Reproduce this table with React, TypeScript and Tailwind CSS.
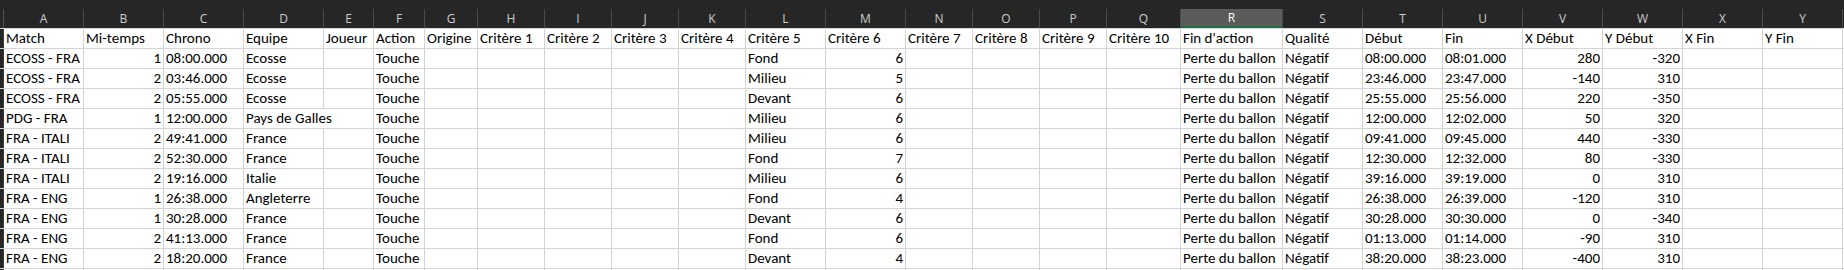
type Col = { letter: string; w: string; num?: boolean };

const cols: Col[] = [
  { letter: 'A', w: 'w-[80px]' },
  { letter: 'B', w: 'w-[80px]', num: true },
  { letter: 'C', w: 'w-[80px]' },
  { letter: 'D', w: 'w-[80px]' },
  { letter: 'E', w: 'w-[50px]' },
  { letter: 'F', w: 'w-[51px]' },
  { letter: 'G', w: 'w-[53px]' },
  { letter: 'H', w: 'w-[67px]' },
  { letter: 'I', w: 'w-[67px]' },
  { letter: 'J', w: 'w-[67px]' },
  { letter: 'K', w: 'w-[67px]' },
  { letter: 'L', w: 'w-[80px]' },
  { letter: 'M', w: 'w-[80px]', num: true },
  { letter: 'N', w: 'w-[67px]' },
  { letter: 'O', w: 'w-[67px]' },
  { letter: 'P', w: 'w-[67px]' },
  { letter: 'Q', w: 'w-[74px]' },
  { letter: 'R', w: 'w-[102px]' },
  { letter: 'S', w: 'w-[80px]' },
  { letter: 'T', w: 'w-[80px]' },
  { letter: 'U', w: 'w-[80px]' },
  { letter: 'V', w: 'w-[80px]', num: true },
  { letter: 'W', w: 'w-[80px]', num: true },
  { letter: 'X', w: 'w-[80px]' },
  { letter: 'Y', w: 'w-[80px]' },
];

const titles = [
  'Match', 'Mi-temps', 'Chrono', 'Equipe', 'Joueur', 'Action', 'Origine',
  'Critère 1', 'Critère 2', 'Critère 3', 'Critère 4', 'Critère 5', 'Critère 6',
  'Critère 7', 'Critère 8', 'Critère 9', 'Critère 10',
  "Fin d'action", 'Qualité', 'Début', 'Fin', 'X Début', 'Y Début', 'X Fin', 'Y Fin',
];

function line(
  match: string, mt: string, chrono: string, equipe: string,
  zone: string, crit6: string, debut: string, fin: string, xd: string, yd: string,
) {
  return [
    match, mt, chrono, equipe, '', 'Touche', '', '', '', '', '', zone, crit6,
    '', '', '', '', 'Perte du ballon', 'Négatif', debut, fin, xd, yd, '', '',
  ];
}

const rows = [
  line('ECOSS - FRA', '1', '08:00.000', 'Ecosse', 'Fond', '6', '08:00.000', '08:01.000', '280', '-320'),
  line('ECOSS - FRA', '2', '03:46.000', 'Ecosse', 'Milieu', '5', '23:46.000', '23:47.000', '-140', '310'),
  line('ECOSS - FRA', '2', '05:55.000', 'Ecosse', 'Devant', '6', '25:55.000', '25:56.000', '220', '-350'),
  line('PDG - FRA', '1', '12:00.000', 'Pays de Galles', 'Milieu', '6', '12:00.000', '12:02.000', '50', '320'),
  line('FRA - ITALI', '2', '49:41.000', 'France', 'Milieu', '6', '09:41.000', '09:45.000', '440', '-330'),
  line('FRA - ITALI', '2', '52:30.000', 'France', 'Fond', '7', '12:30.000', '12:32.000', '80', '-330'),
  line('FRA - ITALI', '2', '19:16.000', 'Italie', 'Milieu', '6', '39:16.000', '39:19.000', '0', '310'),
  line('FRA - ENG', '1', '26:38.000', 'Angleterre', 'Fond', '4', '26:38.000', '26:39.000', '-120', '310'),
  line('FRA - ENG', '1', '30:28.000', 'France', 'Devant', '6', '30:28.000', '30:30.000', '0', '-340'),
  line('FRA - ENG', '2', '41:13.000', 'France', 'Fond', '6', '01:13.000', '01:14.000', '-90', '310'),
  line('FRA - ENG', '2', '18:20.000', 'France', 'Devant', '4', '38:20.000', '38:23.000', '-400', '310'),
];

function Row({ cells, header }: { cells: string[]; header?: boolean }) {
  return (
    <div className="flex h-[20px] border-b border-[#d4d4d4] bg-white">
      <div className="w-[4px] shrink-0 bg-[#262626] border-r border-[#3a3a3a]" />
      {cols.map((c, i) => {
        const spills = cells[i].length > 12 && i === 3;
        return (
          <div
            key={c.letter}
            className={`${c.w} shrink-0 flex items-end px-[2px] text-[15px] leading-[19px] text-black whitespace-nowrap border-r ${
              spills ? 'overflow-visible border-transparent relative z-10' : 'overflow-hidden border-[#d4d4d4]'
            } ${c.num && !header ? 'justify-end' : 'justify-start'}`}
          >
            {cells[i]}
          </div>
        );
      })}
    </div>
  );
}

export default function App() {
  return (
    <div className="w-[1844px] h-[270px] overflow-hidden bg-[#262626] font-['Carlito','Lato',sans-serif]">
      <div className="h-[9px]" />
      <div className="flex h-[19px] font-['Open_Sans',sans-serif] text-[12px] leading-[19px] text-[#cdcdcd]">
        <div className="w-[4px] shrink-0 border-r border-[#555555]" />
        {cols.map((c) => (
          <div
            key={c.letter}
            className={`${c.w} shrink-0 text-center border-r border-[#4a4a4a] ${
              c.letter === 'R' ? 'bg-[#5b5b5b] text-white border-b-2 border-b-[#1e7145] leading-[17px]' : ''
            }`}
          >
            {c.letter}
          </div>
        ))}
      </div>
      <div className="border-t border-[#d4d4d4]">
        <Row cells={titles} header />
        {rows.map((r, i) => (
          <Row key={i} cells={r} />
        ))}
        <Row cells={titles.map(() => '')} />
      </div>
    </div>
  );
}
